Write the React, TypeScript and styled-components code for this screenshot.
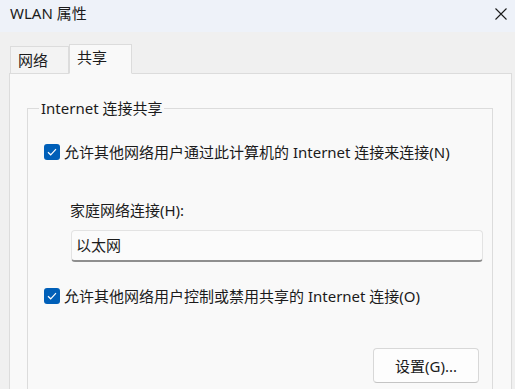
import React from "react";
import styled, { createGlobalStyle } from "styled-components";

const Global = createGlobalStyle`
  html, body { margin: 0; padding: 0; }
  body {
    width: 515px;
    height: 389px;
    overflow: hidden;
    background: #f0f0f0;
    font-family: "Noto Sans", "Noto Sans CJK SC", sans-serif;
    font-size: 15px;
    color: #1b1b1b;
  }
`;

const Window = styled.div`
  width: 515px;
  height: 389px;
  display: flex;
  flex-direction: column;
  background: #f0f0f0;
  overflow: hidden;
`;

const TitleBar = styled.div`
  height: 32px;
  flex: none;
  display: flex;
  align-items: center;
  justify-content: space-between;
  padding: 0 7px 0 10px;
  background: #eef2f9;
`;

const Title = styled.span`
  font-size: 15px;
  line-height: 20px;
  margin-top: -7px;
`;

const CloseBtn = styled.div`
  width: 14px;
  height: 14px;
  margin-top: -5px;
  display: flex;
  align-items: center;
  justify-content: center;
`;

const Content = styled.div`
  flex: 1;
  display: flex;
  flex-direction: column;
  padding: 12px 3px 0 9px;
`;

const TabStrip = styled.div`
  display: flex;
  align-items: flex-end;
  padding-left: 1px;
  height: 30px;
  position: relative;
  z-index: 1;
  margin-bottom: -1px;
`;

const Tab = styled.div<{ $active?: boolean }>`
  box-sizing: border-box;
  display: flex;
  align-items: center;
  justify-content: flex-start;
  height: ${(p) => (p.$active ? "30px" : "28px")};
  width: ${(p) => (p.$active ? "63px" : "59px")};
  padding: 0 0 ${(p) => (p.$active ? "4px" : "1px")} 7px;
  background: ${(p) => (p.$active ? "#f9f9f9" : "#f3f3f3")};
  border: 1px solid #dcdcdc;
  border-bottom: ${(p) => (p.$active ? "1px solid #f9f9f9" : "1px solid #dcdcdc")};
  font-size: 15px;
  line-height: 20px;
`;

const Panel = styled.div`
  flex: 1;
  background: #f9f9f9;
  border: 1px solid #dcdcdc;
  border-bottom: none;
  padding: 24px 18px 0 17px;
`;

const Group = styled.fieldset`
  margin: 0;
  padding: 0 0 0 16px;
  min-width: 0;
  border: 1px solid #dcdcdc;
  border-bottom: none;
  height: 320px;
  display: flex;
  flex-direction: column;
  align-items: flex-start;
  box-sizing: border-box;
`;

const Legend = styled.legend`
  margin-left: -5px;
  padding: 0 2px;
  font-size: 15px;
  line-height: 20px;
`;

const CheckRow = styled.label<{ $top: number }>`
  display: flex;
  align-items: center;
  gap: 4px;
  margin-top: ${(p) => p.$top}px;
  line-height: 20px;
  height: 20px;
`;

const Box = styled.span`
  width: 16px;
  height: 16px;
  border-radius: 3px;
  background: #005fb8;
  display: flex;
  align-items: center;
  justify-content: center;
  flex: none;
`;

const FieldLabel = styled.div`
  margin: 38px 0 0 26px;
  line-height: 20px;
`;

const Combo = styled.div`
  box-sizing: border-box;
  align-self: stretch;
  margin: 10px 9px 0 27px;
  height: 32px;
  padding: 0 0 1px 4px;
  display: flex;
  align-items: center;
  background: #fbfbfb;
  border: 1px solid #e3e3e3;
  border-bottom: 2px solid #8f8f8f;
  border-radius: 4px;
  line-height: 20px;
`;

const ButtonRow = styled.div`
  align-self: stretch;
  display: flex;
  justify-content: flex-end;
  margin: 42px 13px 0 0;
`;

const Button = styled.div`
  box-sizing: border-box;
  width: 106px;
  height: 35px;
  display: flex;
  align-items: center;
  justify-content: center;
  background: #fdfdfd;
  border: 1px solid #d8d8d8;
  border-bottom-color: #c4c4c4;
  border-radius: 4px;
  line-height: 20px;
`;

const Check = () => (
  <Box>
    <svg width="10" height="8" viewBox="0 0 10 8">
      <path d="M1 4.2 L3.7 6.8 L9 1.2" fill="none" stroke="#fff" strokeWidth="1.2" />
    </svg>
  </Box>
);

export default function App() {
  return (
    <Window>
      <Global />
      <TitleBar>
        <Title>WLAN 属性</Title>
        <CloseBtn>
          <svg width="14" height="14" viewBox="0 0 14 14">
            <path d="M1.5 1.5 L12.5 12.5 M12.5 1.5 L1.5 12.5" stroke="#1b1b1b" strokeWidth="1.1" />
          </svg>
        </CloseBtn>
      </TitleBar>
      <Content>
        <TabStrip>
          <Tab>网络</Tab>
          <Tab $active>共享</Tab>
        </TabStrip>
        <Panel>
          <Group>
            <Legend>Internet 连接共享</Legend>
            <CheckRow $top={24}>
              <Check />
              允许其他网络用户通过此计算机的 Internet 连接来连接(N)
            </CheckRow>
            <FieldLabel>家庭网络连接(H):</FieldLabel>
            <Combo>以太网</Combo>
            <CheckRow $top={24}>
              <Check />
              允许其他网络用户控制或禁用共享的 Internet 连接(O)
            </CheckRow>
            <ButtonRow>
              <Button>设置(G)...</Button>
            </ButtonRow>
          </Group>
        </Panel>
      </Content>
    </Window>
  );
}
